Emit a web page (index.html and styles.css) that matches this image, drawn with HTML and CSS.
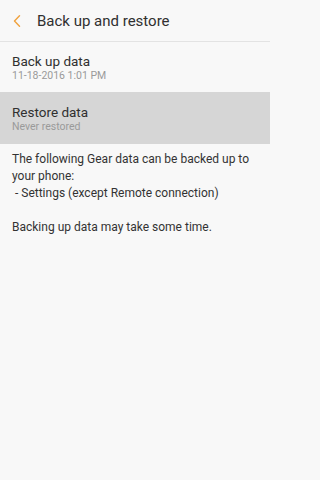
FILE: index.html
```html
<!DOCTYPE html>
<html lang="en">
<head>
<meta charset="utf-8">
<title>Back up and restore</title>
<link rel="stylesheet" href="styles.css">
</head>
<body>
<div class="screen">
  <header class="appbar">
    <svg class="back" width="8" height="12" viewBox="0 0 8 12" aria-hidden="true">
      <polyline points="6.5,0.8 1.5,6 6.5,11.2" fill="none" stroke="#f0a23e" stroke-width="1.4" stroke-linecap="round" stroke-linejoin="round"/>
    </svg>
    <h1 class="title">Back up and restore</h1>
  </header>
  <main>
    <div class="item">
      <div class="item-title">Back up data</div>
      <div class="item-sub">11-18-2016 1:01 PM</div>
    </div>
    <div class="item item-pressed">
      <div class="item-title">Restore data</div>
      <div class="item-sub">Never restored</div>
    </div>
    <div class="info">
      <p>The following Gear data can be backed up to your phone:<br>&nbsp;- Settings (except Remote connection)</p>
      <p>Backing up data may take some time.</p>
    </div>
  </main>
</div>
</body>
</html>
```
FILE: styles.css
```css
html, body {
  margin: 0;
  padding: 0;
  background: #f8f8f8;
}
.screen {
  font-family: Roboto, "Noto Sans", sans-serif;
  color: #333333;
  width: 270px;
  height: 480px;
}
.appbar {
  height: 41px;
  border-bottom: 1px solid #e3e3e3;
  display: flex;
  align-items: center;
  padding-left: 13px;
}
.back {
  display: block;
}
.title {
  margin: 0 0 0 16px;
  font-size: 15px;
  font-weight: 400;
  color: #303030;
}
.item {
  padding: 11px 12px 0;
  height: 50px;
  box-sizing: border-box;
}
.item-pressed {
  background: #d6d6d6;
  padding-top: 12px;
  height: 52px;
}
.item-title {
  font-size: 13.5px;
  line-height: 16px;
  color: #303030;
}
.item-sub {
  font-size: 10.5px;
  line-height: 13px;
  color: #9a9a9a;
}
.info {
  padding: 7px 12px 0;
  font-size: 12px;
  line-height: 17px;
  color: #333333;
}
.info p {
  margin: 0 0 17px;
}
```
